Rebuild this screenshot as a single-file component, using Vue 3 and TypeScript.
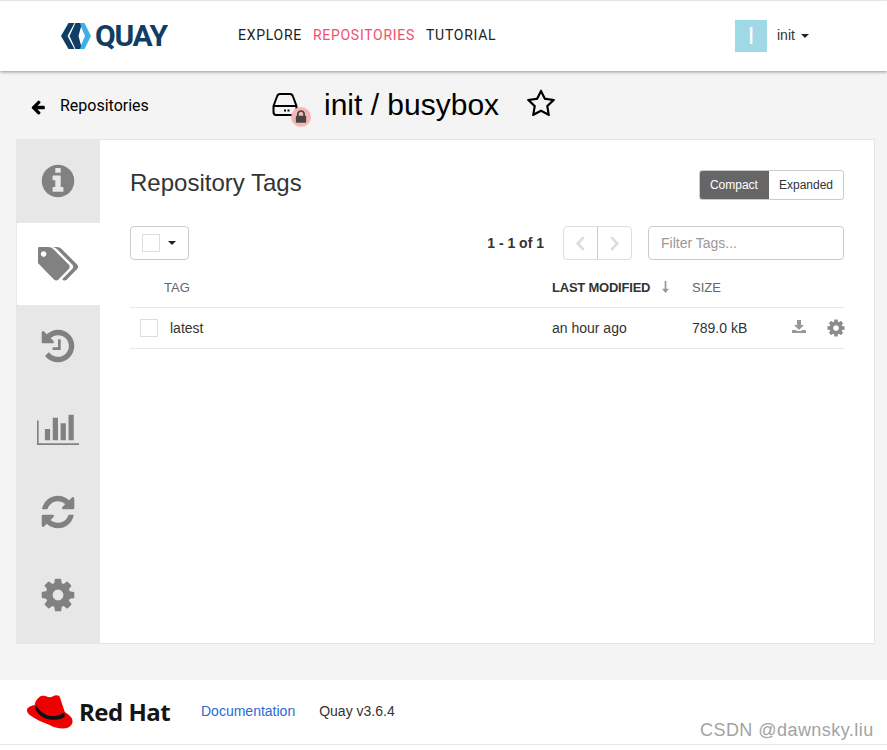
<script setup lang="ts">
const icons = {
  info: { box: '0 0 1792 1792', d: 'M1152 1376v-160q0-14-9-23t-23-9h-96v-512q0-14-9-23t-23-9h-320q-14 0-23 9t-9 23v160q0 14 9 23t23 9h96v320h-96q-14 0-23 9t-9 23v160q0 14 9 23t23 9h448q14 0 23-9t9-23zm-128-896v-160q0-14-9-23t-23-9h-192q-14 0-23 9t-9 23v160q0 14 9 23t23 9h192q14 0 23-9t9-23zm640 416q0 209-103 385.5t-279.5 279.5-385.5 103-385.5-103-279.5-279.5-103-385.5 103-385.5 279.5-279.5 385.5-103 385.5 103 279.5 279.5 103 385.5z' },
  tags: { box: '0 128 1920 1536', d: 'M384 448q0-53-37.5-90.5t-90.5-37.5-90.5 37.5-37.5 90.5 37.5 90.5 90.5 37.5 90.5-37.5 37.5-90.5zm1067 576q0 53-37 90l-491 492q-39 37-91 37-53 0-90-37l-715-716q-38-37-64.5-101t-26.5-117v-416q0-52 38-90t90-38h416q53 0 117 26.5t102 64.5l715 714q37 39 37 91zm384 0q0 53-37 90l-491 492q-39 37-91 37-36 0-59-14t-53-45l470-470q37-37 37-90 0-52-37-91l-715-714q-38-38-102-64.5t-117-26.5h224q53 0 117 26.5t102 64.5l715 714q37 39 37 91z' },
  history: { box: '0 0 1792 1792', d: 'M1664 896q0 156-61 298t-164 245-245 164-298 61q-172 0-327-72.5t-264-204.5q-7-10-6.5-22.5t8.5-20.5l137-138q10-9 25-9 16 2 23 12 73 95 179 147t225 52q104 0 198.5-40.5t163.5-109.5 109.5-163.5 40.5-198.5-40.5-198.5-109.5-163.5-163.5-109.5-198.5-40.5q-98 0-188 35.5t-160 101.5l137 138q31 30 14 69-17 40-59 40h-448q-26 0-45-19t-19-45v-448q0-42 40-59 39-17 69 14l130 129q107-101 244.5-156.5t284.5-55.5q156 0 298 61t245 164 164 245 61 298zm-640-288v448q0 14-9 23t-23 9h-320q-14 0-23-9t-9-23v-64q0-14 9-23t23-9h224v-352q0-14 9-23t23-9h64q14 0 23 9t9 23z' },
  chart: { box: '0 128 2048 1536', d: 'M640 896v512h-256v-512h256zm384-512v1024h-256v-1024h256zm1024 1152v80h-2048v-1104h80v1024h1968zm-640-896v768h-256v-768h256zm384-384v1152h-256v-1152h256z' },
  refresh: { box: '0 0 1792 1792', d: 'M1639 1056q0 5-1 7-64 268-268 434.5t-478 166.5q-146 0-282.5-55t-243.5-157l-129 129q-19 19-45 19t-45-19-19-45v-448q0-26 19-45t45-19h448q26 0 45 19t19 45-19 45l-137 137q71 66 161 102t187 36q134 0 250-65t186-179q11-17 53-117 8-23 30-23h192q13 0 22.5 9.5t9.5 22.5zm25-800v448q0 26-19 45t-45 19h-448q-26 0-45-19t-19-45 19-45l138-138q-148-137-349-137-134 0-250 65t-186 179q-11 17-53 117-8 23-30 23h-199q-13 0-22.5-9.5t-9.5-22.5v-7q65-268 270-434.5t480-166.5q146 0 284 55.5t245 156.5l130-129q19-19 45-19t45 19 19 45z' },
  cog: { box: '0 0 1792 1792', d: 'M1152 896q0-106-75-181t-181-75-181 75-75 181 75 181 181 75 181-75 75-181zm512-109v222q0 12-8 23t-20 13l-185 28q-19 54-39 91 35 50 107 138 10 12 10 25t-9 23q-27 37-99 108t-94 71q-12 0-26-9l-138-108q-44 23-91 38-16 136-29 186-7 28-36 28h-222q-14 0-24.5-8.5t-11.5-21.5l-28-184q-49-16-90-37l-141 107q-10 9-25 9-14 0-25-11-126-114-165-168-7-10-7-23 0-12 8-23 15-21 51-66.5t54-70.5q-27-50-41-99l-183-27q-13-2-21-12.5t-8-23.5v-222q0-12 8-23t19-13l186-28q14-46 39-92-40-57-107-138-10-12-10-24 0-10 9-23 26-36 98.5-107.5t94.5-71.5q13 0 26 10l138 107q44-23 91-38 16-136 29-186 7-28 36-28h222q14 0 24.5 8.5t11.5 21.5l28 184q49 16 90 37l142-107q9-9 24-9 13 0 25 10 129 119 165 170 7 8 7 22 0 12-8 23-15 21-51 66.5t-54 70.5q26 50 41 98l183 28q13 2 21 12.5t8 23.5z' },
}
const tabs = [
  { key: 'info', cls: 'i-info', active: false },
  { key: 'tags', cls: 'i-tags', active: true },
  { key: 'history', cls: 'i-history', active: false },
  { key: 'chart', cls: 'i-chart', active: false },
  { key: 'refresh', cls: 'i-refresh', active: false },
  { key: 'cog', cls: 'i-cog', active: false },
] as const
</script>

<template>
  <div class="page">
    <header class="topbar">
      <a class="logo">
        <svg class="logo-mark" viewBox="0 0 30 26" width="30" height="26">
          <path d="M7.500 0h6L6.500 13l7 13h-6L0 13z" fill="#0f3d63" />
          <path d="M14.500 0h6.500l-3.500 13L21 26h-6.500L8.500 13z" fill="#0f3d63" />
          <path d="M19 0h4.500L30 13l-6.500 13H19l1.500-5L24 13l-3.500-8z" fill="#3fb0e6" />
        </svg>
        <span class="logo-text">QUAY</span>
      </a>
      <nav class="nav">
        <a>EXPLORE</a>
        <a class="current">REPOSITORIES</a>
        <a>TUTORIAL</a>
      </nav>
      <div class="user">
        <span class="avatar">I</span>
        <span class="user-name">init</span>
        <span class="caret"></span>
      </div>
    </header>

    <div class="title-row">
      <a class="back">
        <svg class="back-arrow" viewBox="0 0 1792 1792" width="16" height="16"><path d="M1664 896v128q0 53-32.5 90.5t-84.5 37.5h-704l293 294q38 36 38 90t-38 90l-75 76q-37 37-90 37-52 0-91-37l-651-652q-37-37-37-90 0-52 37-91l651-650q38-38 91-38 52 0 90 38l75 74q38 38 38 91t-38 91l-293 293h704q52 0 84.5 37.5t32.5 90.5z" /></svg>
        <span>Repositories</span>
      </a>
      <div class="repo-icon">
        <svg viewBox="0 0 26 23" width="26" height="23">
          <path d="M1.500 13 L5 3.500 Q5.800 1 8 1 H18 Q20.200 1 21 3.500 L24.500 13 V19 Q24.500 22 22 22 H4 Q1.500 22 1.500 19 Z M1.500 13 H24.500" fill="none" stroke="#000" stroke-width="2" />
          <rect x="12" y="16.500" width="2" height="2" /><rect x="15.500" y="16.500" width="2" height="2" />
        </svg>
        <span class="lock-badge">
          <svg viewBox="0 0 1792 1792" width="16" height="16"><path fill="#444" d="M640 768h512v-192q0-106-75-181t-181-75-181 75-75 181v192zm832 96v576q0 40-28 68t-68 28h-960q-40 0-68-28t-28-68v-576q0-40 28-68t68-28h32v-192q0-184 132-316t316-132 316 132 132 316v192h32q40 0 68 28t28 68z" /></svg>
        </span>
      </div>
      <h1 class="repo-name">init / busybox</h1>
      <svg class="star" viewBox="0 0 1792 1792" width="30" height="30"><path d="M1201 1004l306-297-422-62-189-382-189 382-422 62 306 297-73 421 378-199 377 199zm527-357q0 22-26 48l-363 354 86 500q1 7 1 20 0 50-41 50-19 0-40-12l-449-236-449 236q-22 12-40 12-21 0-31.5-14.5t-10.5-35.5q0-6 2-20l86-500-364-354q-25-27-25-48 0-37 56-46l502-73 225-455q19-41 49-41t49 41l225 455 502 73q56 9 56 46z" /></svg>
    </div>

    <main class="panel">
      <aside class="tabs">
        <div v-for="t in tabs" :key="t.key" class="tab" :class="{ active: t.active }">
          <svg :class="t.cls" :viewBox="icons[t.key].box" preserveAspectRatio="none"><path :d="icons[t.key].d" /></svg>
        </div>
      </aside>
      <section class="content">
        <div class="heading-row">
          <h2>Repository Tags</h2>
          <div class="toggle">
            <span class="on">Compact</span>
            <span>Expanded</span>
          </div>
        </div>

        <div class="toolbar">
          <button class="select-btn"><span class="box"></span><span class="caret small"></span></button>
          <div class="tool-right">
            <span class="count">1 - 1 of 1</span>
            <div class="pager">
              <span><svg viewBox="0 0 12 18" width="11" height="17"><path d="M9.500 2 L3 9 L9.500 16" /></svg></span>
              <span><svg viewBox="0 0 12 18" width="11" height="17"><path d="M2.500 2 L9 9 L2.500 16" /></svg></span>
            </div>
            <input class="filter" placeholder="Filter Tags..." />
          </div>
        </div>

        <div class="row head">
          <div class="c-check"></div>
          <div class="c-tag">TAG</div>
          <div class="c-mod strong">LAST MODIFIED
            <svg viewBox="0 0 8 14" width="7" height="12"><path d="M3 0h2v9h3l-4 5-4-5h3z" fill="#999" /></svg>
          </div>
          <div class="c-size">SIZE</div>
          <div class="c-actions"></div>
        </div>
        <div class="row body">
          <div class="c-check"><span class="box"></span></div>
          <div class="c-tag">latest</div>
          <div class="c-mod">an hour ago</div>
          <div class="c-size">789.0 kB</div>
          <div class="c-actions">
            <svg class="dl" viewBox="0 0 14 13" width="14" height="13"><path d="M5 0h4v5h3L7 10 2 5h3zM0 10h4l1 1h4l1-1h4v3H0z" fill="#999" /></svg>
            <svg viewBox="0 0 1792 1792" width="20" height="20"><path fill="#8c8c8c" :d="icons.cog.d" /></svg>
          </div>
        </div>
      </section>
    </main>

    <footer class="footer">
      <div class="footer-inner">
        <a class="rh">
          <svg viewBox="0 0 46 34" width="46" height="34">
            <path fill="#ee0000" d="M12.700 1.700 C14.500 .5 16 .5 17.700 .8 C19.500 1.300 21 2.300 22.700 2.300 C25 2.300 27 .2 29.500 .2 C31.500 .2 32.500 1 33 2.500 L37.700 16.700 C40 19 45 21 45.500 25.500 C46 30 42 33.500 36 33.500 C31 33.500 26 32 22.700 30 C15 27 8 24 2.700 20 C1 18.500 0 17 0 15 C0 12.500 4 10.500 7.700 10 C8 7.500 9 4.500 12.700 1.700Z" />
            <path fill="#111" d="M9.300 10.700 C8.800 11.800 8.400 13 8.300 14.300 C11 19.500 17 24.300 24 24.800 C29.500 25 35 24.500 37.700 21.700 C38 20 37.500 18.800 36.700 17.700 C33 20.500 28 21.200 24.300 21 C18 20.500 12 15.500 9.300 10.700Z" />
          </svg>
          <span class="rh-text">Red Hat</span>
        </a>
        <a class="doc">Documentation</a>
        <span class="ver">Quay v3.6.4</span>
        <span class="mark">CSDN @dawnsky.liu</span>
      </div>
    </footer>
  </div>
</template>

<style>
body { margin: 0; background: #f4f4f4; }
</style>

<style scoped>
* { box-sizing: border-box; }
.page {
  width: 887px; height: 750px; overflow: hidden; background: #f4f4f4;
  font-family: "Liberation Sans", Arial, sans-serif; font-size: 14px; color: #333;
  display: flex; flex-direction: column;
}
.topbar {
  height: 70px; margin-top: 1px; background: #fff; box-shadow: 0 1px 3px rgba(0,0,0,.4);
  display: flex; align-items: center; padding-left: 61px; flex: none; position: relative;
}
.logo { display: flex; align-items: center; width: 177px; margin-bottom: 1px; }
.logo-mark { display: block; }
.logo-text { font: 700 30px/1 Roboto, sans-serif; color: #0f3d63; letter-spacing: -1.3px; margin-left: 4px; }
.nav { display: flex; gap: 11px; font: 400 14px/20px Roboto, sans-serif; letter-spacing: .72px; color: #222; width: 497px; margin-bottom: 3px; }
.nav .current { color: #f2506a; }
.user { display: flex; align-items: center; }
.avatar {
  width: 32px; height: 32px; background: #9fd9e6; color: #fff; display: flex; align-items: center; justify-content: center;
  font: 24px/1 "Liberation Sans", sans-serif;
}
.user-name { margin-left: 10px; color: #333; margin-bottom: 3px; }
.caret { width: 0; height: 0; border: 4px solid transparent; border-top-color: #222; border-bottom: 0; margin-left: 6px; }
.title-row { height: 68px; display: flex; align-items: center; padding-left: 30px; flex: none; color: #000; }
.back { display: flex; align-items: center; width: 242px; font: 16px/20px Roboto, sans-serif; margin-top: 1px; }
.back-arrow { margin-right: 14px; margin-top: 3px; }
.repo-icon { position: relative; width: 26px; height: 23px; margin-right: 26px; margin-top: -2px; }
.repo-icon > svg { display: block; }
.lock-badge {
  position: absolute; left: 19px; top: 14px; width: 20px; height: 20px; border-radius: 50%;
  background: #f6b6b6; display: flex; align-items: center; justify-content: center;
}
.repo-name { margin: 0 28px 0 0; font: 400 30px/36px "Liberation Sans", sans-serif; color: #000; }
.star { display: block; margin-top: -2px; margin-left: -1px; }
.panel {
  margin: 0 12px 0 16px; height: 505px; flex: none; display: flex; background: #fff; border: 1px solid #e4e4e4; border-left: 0;
}
.tabs { width: 84px; background: #e7e7e7; flex: none; }
.tab { height: 83px; padding-bottom: 1px; display: flex; align-items: center; justify-content: center; border-bottom: 1px solid #e3e7ea; }
.tab.active { background: #fff; border-left: 1px solid #e7e7e7; border-bottom: 0; height: 82px; padding-bottom: 1px; }
.tab svg { fill: #818181; display: block; }
.i-info { width: 38px; height: 38px; }
.i-tags { width: 42px; height: 34px; }
.i-history { width: 38px; height: 38px; }
.i-chart { width: 42px; height: 34px; }
.i-refresh { width: 38px; height: 38px; }
.i-cog { width: 38px; height: 38px; }
.content { flex: 1; padding: 30px 30px 0 30px; min-width: 0; }
.heading-row { display: flex; justify-content: space-between; align-items: flex-start; height: 56px; }
h2 { margin: -1px 0 0; font: 400 24px/28px "Liberation Sans", sans-serif; color: #333; }
.toggle { display: flex; height: 30px; border: 1px solid #ccc; border-radius: 3px; overflow: hidden; font-size: 12px; line-height: 28px; color: #333; }
.toggle span { padding: 0 10px; }
.toggle .on { background: #666; color: #fff; padding: 0 11px 0 10px; }
.toolbar { display: flex; justify-content: space-between; align-items: center; height: 34px; }
.select-btn { width: 59px; height: 34px; background: #fff; border: 1px solid #ccc; border-radius: 4px; padding: 0 0 0 11px; display: flex; align-items: center; }
.box { display: block; width: 18px; height: 18px; border: 1px solid #ddd; background: #fff; }
.caret.small { margin-left: 8px; margin-top: 0; }
.tool-right { display: flex; align-items: center; }
.count { font-weight: 700; font-size: 14px; color: #333; margin-right: 19px; }
.pager { display: flex; height: 34px; width: 69px; border: 1px solid #ddd; border-radius: 4px; margin-right: 16px; }
.pager span { flex: 1; display: flex; align-items: center; justify-content: center; }
.pager span + span { border-left: 1px solid #ccc; }
.pager path { fill: none; stroke: #ddd; stroke-width: 3; }
.filter { width: 196px; height: 34px; border: 1px solid #ccc; border-radius: 4px; padding: 0 12px; font: 14px "Liberation Sans", sans-serif; color: #555; background: #fff; outline: 0; }
.filter::placeholder { color: #999; opacity: 1; }
.row { display: flex; align-items: center; border-bottom: 1px solid #e8e8e8; }
.row.head { height: 48px; color: #666; padding-top: 7px; font-size: 13px; }
.row.body { height: 41px; color: #333; }
.c-check { width: 40px; padding-left: 10px; flex: none; }
.head .c-check { width: 34px; }
.c-tag { flex: 1; }
.c-mod { width: 140px; flex: none; display: flex; align-items: center; }
.strong { font-weight: 700; letter-spacing: -.22px; color: #333; }
.strong svg { margin-left: 12px; }
.c-size { width: 100px; flex: none; }
.c-actions { width: 54px; flex: none; display: flex; align-items: center; justify-content: space-between; margin-right: -2px; }
.dl { margin-top: -3px; }
.footer { margin-top: 36px; flex: 1; background: #fff; }
.footer-inner {
  height: 65px; border-bottom: 1px solid #e8e8e8; display: flex; align-items: center; padding-left: 27px; position: relative;
}
.rh { display: flex; align-items: center; width: 174px; }
.rh-text { font: 700 24px/1 "Open Sans", sans-serif; color: #151515; letter-spacing: -.5px; margin-left: 6px; }
.doc { color: #2a6bd6; margin-right: 24px; margin-bottom: 2px; }
.ver { color: #333; margin-bottom: 2px; }
.mark { position: absolute; left: 700px; top: 40px; font: 18px/20px "Liberation Sans", sans-serif; letter-spacing: .45px; color: #a3a3a3; }
</style>
